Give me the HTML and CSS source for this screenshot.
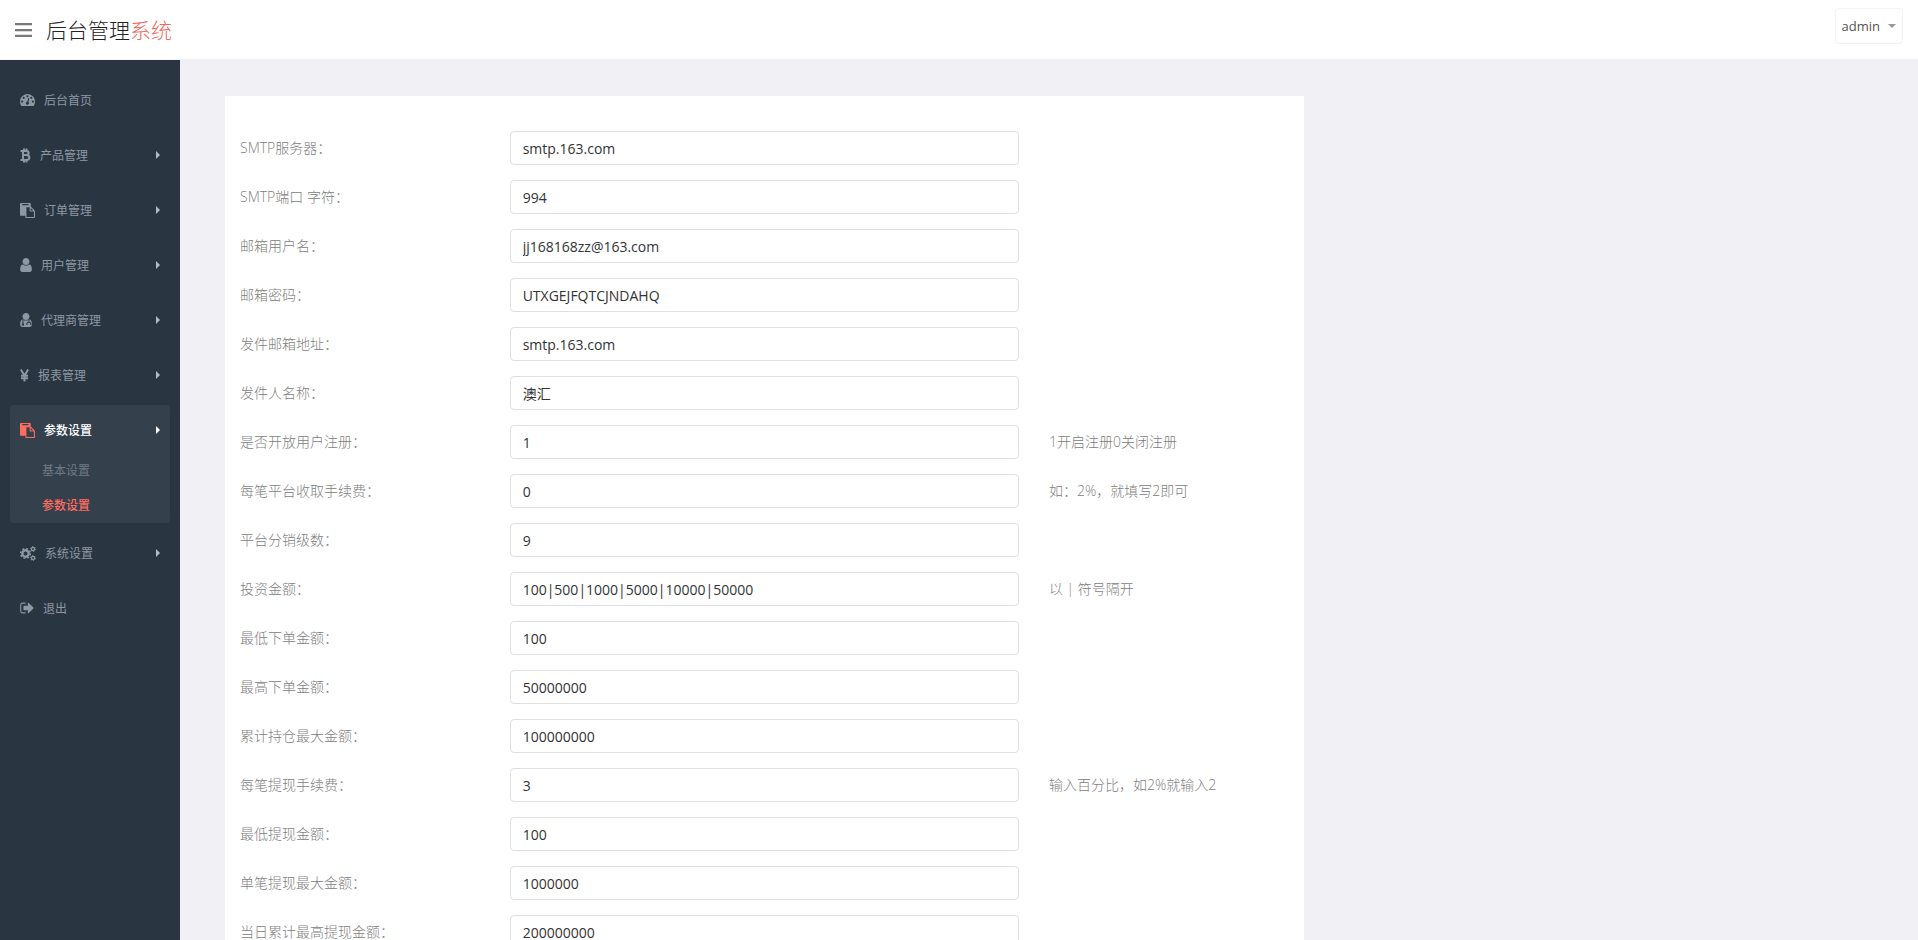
FILE: index.html
```html
<!DOCTYPE html>
<html lang="zh-CN">
  <head>
    <meta charset="UTF-8" />
    <meta name="viewport" content="width=device-width, initial-scale=1" />
    <title>后台管理系统</title>
    <link rel="stylesheet" href="styles.css">
  </head>
  <body>
    <header class="header">
      <button type="button" class="menu-toggle" aria-label="菜单">
        <svg viewBox="0 0 17 14" width="17" height="14" aria-hidden="true">
          <path d="M0 0h17v2.300H0zM0 6h17v2.300H0zM0 11.700h17v2.300H0z"></path>
        </svg>
      </button>
      <a href="#" class="logo">后台管理<span>系统</span></a>
      <button type="button" class="user-btn">admin <i class="caret"></i></button>
    </header>

    <div class="wrapper">
      <nav class="sidebar">
        <ul class="menu">
          <li>
            <a href="#">
              <svg viewBox="0 256 1792 1408" width="15" height="12" aria-hidden="true">
                <path d="M384 1152q0-53-37.500-90.500t-90.500-37.500-90.500 37.500-37.500 90.500 37.500 90.500 90.500 37.500 90.500-37.500 37.500-90.500zm192-448q0-53-37.500-90.500t-90.500-37.500-90.500 37.500-37.500 90.500 37.500 90.500 90.500 37.500 90.500-37.500 37.500-90.500zm428 481l101-382q6-26-7.500-48.500t-38.500-29.500-48 6.500-30 39.500l-101 382q-60 5-107 43.500t-63 98.500q-20 77 20 146t117 89 146-20 89-117q16-60-6-117t-72-91zm660-33q0-53-37.500-90.500t-90.500-37.500-90.500 37.500-37.500 90.500 37.500 90.500 90.500 37.500 90.500-37.500 37.500-90.500zm-640-640q0-53-37.500-90.500t-90.500-37.500-90.500 37.500-37.500 90.500 37.500 90.500 90.500 37.500 90.500-37.500 37.500-90.500zm448 192q0-53-37.500-90.500t-90.500-37.500-90.500 37.500-37.500 90.500 37.500 90.500 90.500 37.500 90.500-37.500 37.500-90.500zm320 448q0 261-141 483-19 29-54 29h-1402q-35 0-54-29-141-221-141-483 0-182 71-348t191-286 286-191 348-71 348 71 286 191 191 286 71 348z"></path>
              </svg>
              <span>后台首页</span>
            </a>
          </li>
          <li>
            <a href="#">
              <svg class="line" viewBox="0 0 11 15" width="11" height="15" aria-hidden="true">
                <path d="M0.500 3H6c3.500 0 3.500 4 0 4H3.500M6 7c4.500 0 4.500 5 0 5H0.500M3 3v9M4 0.500V3M6.500 0.500V3M4 12v2.500M6.500 12v2.500"></path>
              </svg>
              <span>产品管理</span>
              <i class="arrow"></i>
            </a>
          </li>
          <li>
            <a href="#">
              <svg viewBox="0 0 1792 1792" width="15" height="15" aria-hidden="true">
                <path d="M768 1664h896v-640h-416q-40 0-68-28t-28-68v-416h-384v1152zm256-1440v-64q0-13-9.500-22.500t-22.500-9.500h-704q-13 0-22.500 9.500t-9.500 22.500v64q0 13 9.500 22.500t22.500 9.500h704q13 0 22.500-9.500t9.500-22.500zm256 672h299l-299-299v299zm512 128v672q0 40-28 68t-68 28h-960q-40 0-68-28t-28-68v-160h-544q-40 0-68-28t-28-68v-1344q0-40 28-68t68-28h1088q40 0 68 28t28 68v328q21 13 36 28l408 408q28 28 48 76t20 88z"></path>
              </svg>
              <span>订单管理</span>
              <i class="arrow"></i>
            </a>
          </li>
          <li>
            <a href="#">
              <svg viewBox="256 128 1280 1536" width="12" height="14" aria-hidden="true">
                <path d="M1536 1399q0 109-62.500 187t-150.500 78h-854q-88 0-150.500-78t-62.500-187q0-85 8.500-160.500t31.500-152 58.500-131 94-89 134.500-34.500q131 128 313 128t313-128q76 0 134.500 34.500t94 89 58.500 131 31.500 152 8.500 160.500zm-256-887q0 159-112.500 271.500t-271.500 112.500-271.500-112.500-112.500-271.500 112.500-271.500 271.500-112.500 271.500 112.500 112.500 271.500z"></path>
              </svg>
              <span>用户管理</span>
              <i class="arrow"></i>
            </a>
          </li>
          <li>
            <a href="#">
              <svg viewBox="256 128 1280 1536" width="12" height="14" aria-hidden="true">
                <path d="M1536 1399q0 109-62.500 187t-150.500 78h-854q-88 0-150.500-78t-62.500-187q0-85 8.500-160.500t31.500-152 58.500-131 94-89 134.500-34.500q131 128 313 128t313-128q76 0 134.500 34.500t94 89 58.500 131 31.500 152 8.500 160.500zm-256-887q0 159-112.500 271.500t-271.500 112.500-271.500-112.500-112.500-271.500 112.500-271.500 271.500-112.500 271.500 112.500 112.500 271.500z"></path>
                <g class="detail">
                  <path d="M560 900v420M1220 900v220M1000 1440v-160q0-140 220-140 190 0 190 140v160"></path>
                  <circle cx="560" cy="1400" r="80"></circle>
                </g>
              </svg>
              <span>代理商管理</span>
              <i class="arrow"></i>
            </a>
          </li>
          <li>
            <a href="#">
              <svg class="line" viewBox="0 0 9 13" width="9" height="13" aria-hidden="true">
                <path d="M0.800 0.500L4.500 6.500 8.200 0.500M4.500 6.500V12.500M1 6.800h7M1 9.200h7"></path>
              </svg>
              <span>报表管理</span>
              <i class="arrow"></i>
            </a>
          </li>
          <li class="active">
            <a href="#">
              <svg viewBox="0 0 1792 1792" width="15" height="15" aria-hidden="true">
                <path d="M768 1664h896v-640h-416q-40 0-68-28t-28-68v-416h-384v1152zm256-1440v-64q0-13-9.500-22.500t-22.500-9.500h-704q-13 0-22.500 9.500t-9.500 22.500v64q0 13 9.500 22.500t22.500 9.500h704q13 0 22.500-9.500t9.500-22.500zm256 672h299l-299-299v299zm512 128v672q0 40-28 68t-68 28h-960q-40 0-68-28t-28-68v-160h-544q-40 0-68-28t-28-68v-1344q0-40 28-68t68-28h1088q40 0 68 28t28 68v328q21 13 36 28l408 408q28 28 48 76t20 88z"></path>
              </svg>
              <span>参数设置</span>
              <i class="arrow"></i>
            </a>
            <ul class="submenu">
              <li><a href="#">基本设置</a></li>
              <li><a href="#" class="current">参数设置</a></li>
            </ul>
          </li>
          <li>
            <a href="#">
              <svg class="cogs" viewBox="0 0 16 15" width="16" height="15" aria-hidden="true">
                <circle cx="5.500" cy="7.500" r="3.200" stroke-width="2.400"></circle>
                <circle cx="5.500" cy="7.500" r="4.800" stroke-width="1.600" stroke-dasharray="1.880 1.890"></circle>
                <circle cx="13" cy="3" r="1.600" stroke-width="1.300"></circle>
                <circle cx="13" cy="3" r="2.500" stroke-width="0.900" stroke-dasharray="1.300 1.310"></circle>
                <circle cx="13" cy="12" r="1.600" stroke-width="1.300"></circle>
                <circle cx="13" cy="12" r="2.500" stroke-width="0.900" stroke-dasharray="1.300 1.310"></circle>
              </svg>
              <span>系统设置</span>
              <i class="arrow"></i>
            </a>
          </li>
          <li>
            <a href="#">
              <svg viewBox="64 192 1600 1408" width="14" height="12" aria-hidden="true">
                <path d="M704 1440q0 4 1 20t.5 26.500-3 23.500-10 19.500-20.500 6.500h-320q-119 0-203.500-84.500t-84.500-203.500v-704q0-119 84.500-203.500t203.500-84.500h320q13 0 22.500 9.500t9.500 22.500q0 4 1 20t.5 26.500-3 23.500-10 19.500-20.500 6.500h-320q-66 0-113 47t-47 113v704q0 66 47 113t113 47h312l11.500 1 11.500 3 8 5.500 7 9 2 13.500zm928-544q0 26-19 45l-544 544q-19 19-45 19t-45-19-19-45v-288h-448q-26 0-45-19t-19-45v-384q0-26 19-45t45-19h448v-288q0-26 19-45t45-19 45 19l544 544q19 19 19 45z"></path>
              </svg>
              <span>退出</span>
            </a>
          </li>
        </ul>
      </nav>

      <main class="content">
        <form class="panel">
          <div class="form-group">
            <label for="smtpServer">SMTP服务器：</label>
            <input type="text" id="smtpServer" value="smtp.163.com" />
          </div>
          <div class="form-group">
            <label for="smtpPort">SMTP端口 字符：</label>
            <input type="text" id="smtpPort" value="994" />
          </div>
          <div class="form-group">
            <label for="mailUser">邮箱用户名：</label>
            <input type="text" id="mailUser" value="jj168168zz@163.com" />
          </div>
          <div class="form-group">
            <label for="mailPass">邮箱密码：</label>
            <input type="text" id="mailPass" value="UTXGEJFQTCJNDAHQ" />
          </div>
          <div class="form-group">
            <label for="mailFrom">发件邮箱地址：</label>
            <input type="text" id="mailFrom" value="smtp.163.com" />
          </div>
          <div class="form-group">
            <label for="mailName">发件人名称：</label>
            <input type="text" id="mailName" value="澳汇" />
          </div>
          <div class="form-group">
            <label for="openReg">是否开放用户注册：</label>
            <input type="text" id="openReg" value="1" />
            <span class="help">1开启注册0关闭注册</span>
          </div>
          <div class="form-group">
            <label for="orderFee">每笔平台收取手续费：</label>
            <input type="text" id="orderFee" value="0" />
            <span class="help">如：2%，就填写2即可</span>
          </div>
          <div class="form-group">
            <label for="levels">平台分销级数：</label>
            <input type="text" id="levels" value="9" />
          </div>
          <div class="form-group">
            <label for="amounts">投资金额：</label>
            <input type="text" id="amounts" value="100|500|1000|5000|10000|50000" />
            <span class="help">以 | 符号隔开</span>
          </div>
          <div class="form-group">
            <label for="orderMin">最低下单金额：</label>
            <input type="text" id="orderMin" value="100" />
          </div>
          <div class="form-group">
            <label for="orderMax">最高下单金额：</label>
            <input type="text" id="orderMax" value="50000000" />
          </div>
          <div class="form-group">
            <label for="holdMax">累计持仓最大金额：</label>
            <input type="text" id="holdMax" value="100000000" />
          </div>
          <div class="form-group">
            <label for="cashFee">每笔提现手续费：</label>
            <input type="text" id="cashFee" value="3" />
            <span class="help">输入百分比，如2%就输入2</span>
          </div>
          <div class="form-group">
            <label for="cashMin">最低提现金额：</label>
            <input type="text" id="cashMin" value="100" />
          </div>
          <div class="form-group">
            <label for="cashMax">单笔提现最大金额：</label>
            <input type="text" id="cashMax" value="1000000" />
          </div>
          <div class="form-group">
            <label for="cashDayMax">当日累计最高提现金额：</label>
            <input type="text" id="cashDayMax" value="200000000" />
          </div>
        </form>
      </main>
    </div>
  </body>
</html>
```

FILE: styles.css
```css
:root {
  --clr-side: #2a3542;
  --clr-side-active: #35404d;
  --clr-side-text: #8d98a3;
  --clr-accent: #ff6c60;
  --clr-bg: #f1f1f5;
  --clr-border: #e0e0e4;
  --font-family: "Open Sans", "Noto Sans CJK SC", sans-serif;
}

* {
  box-sizing: border-box;
}

body {
  margin: 0;
  height: 100vh;
  display: flex;
  flex-direction: column;
  overflow: hidden;
  background: var(--clr-bg);
  font-family: var(--font-family);
  font-size: 14px;
  color: #808080;
}

a {
  color: inherit;
  text-decoration: none;
}

ul {
  list-style: none;
  margin: 0;
  padding: 0;
}

button {
  font-family: inherit;
  cursor: pointer;
}

/* Header */
.header {
  flex: none;
  display: flex;
  align-items: center;
  height: 60px;
  padding: 0 15px;
  background: #fff;
  border-bottom: 1px solid var(--clr-bg);
}

.menu-toggle {
  display: flex;
  padding: 0;
  margin-right: 14px;
  border: 0;
  background: none;
  fill: #797979;
}

.logo {
  font-size: 21px;
  font-weight: 300;
  line-height: 30px;
  color: #222;
}

.logo span {
  color: #ec6a60;
}

.user-btn {
  display: flex;
  align-items: center;
  gap: 8px;
  height: 36px;
  margin: 0 0 8px auto;
  padding: 0 6px;
  border: 1px solid #f3f3f3;
  border-radius: 4px;
  background: #fff;
  font-size: 13px;
  color: #555;
}

.caret {
  border: 4px solid transparent;
  border-top-color: #999;
  border-bottom: 0;
}

.wrapper {
  flex: 1;
  min-height: 0;
  display: flex;
}

/* Sidebar */
.sidebar {
  flex: none;
  width: 180px;
  padding: 15px 10px;
  background: var(--clr-side);
  font-size: 12px;
  color: var(--clr-side-text);
}

.menu > li {
  margin-bottom: 5px;
  border-radius: 4px;
}

.menu > li > a {
  display: flex;
  align-items: center;
  gap: 9px;
  height: 50px;
  padding: 0 10px;
}

.menu svg {
  fill: currentColor;
}

.menu .line {
  fill: none;
  stroke: currentColor;
  stroke-width: 2;
}

.menu .cogs {
  fill: none;
  stroke: currentColor;
}

.detail {
  fill: none;
  stroke: var(--clr-side);
  stroke-width: 110;
}

.arrow {
  margin-left: auto;
  border: 4px solid transparent;
  border-left-color: #b4bbc2;
  border-right: 0;
}

.menu .active {
  padding-bottom: 2px;
  background: var(--clr-side-active);
}

.active > a {
  color: #fff;
  font-weight: 500;
}

.active > a svg {
  color: var(--clr-accent);
}

.active .arrow {
  border-left-color: #fff;
}

.submenu {
  padding-top: 1px;
}

.submenu a {
  display: block;
  margin-bottom: 5px;
  padding-left: 32px;
  line-height: 30px;
  color: #6f7a85;
}

.submenu li:last-child a {
  margin-bottom: 0;
}

.submenu .current {
  color: var(--clr-accent);
  font-weight: 500;
}

/* Content */
.content {
  flex: 1;
  display: grid;
  grid-template-columns: repeat(3, 1fr);
  column-gap: 30px;
  align-items: start;
  padding: 36px 60px 36px 45px;
  overflow-y: auto;
  scrollbar-width: none;
}

.panel {
  grid-column: span 2;
  padding: 35px 0 20px;
  background: #fff;
}

.form-group {
  display: grid;
  grid-template-columns: 1fr 2fr 1fr;
  margin-bottom: 15px;
}

.form-group label,
.help {
  padding: 0 15px;
  font-weight: 300;
  line-height: 34px;
}

.form-group input {
  height: 34px;
  min-width: 0;
  margin: 0 15px;
  padding: 6px 12px;
  border: 1px solid var(--clr-border);
  border-radius: 4px;
  background: #fff;
  font-family: inherit;
  font-size: 14px;
  color: #333;
}

.form-group input:focus {
  outline: none;
  border-color: #66afe9;
}
```
